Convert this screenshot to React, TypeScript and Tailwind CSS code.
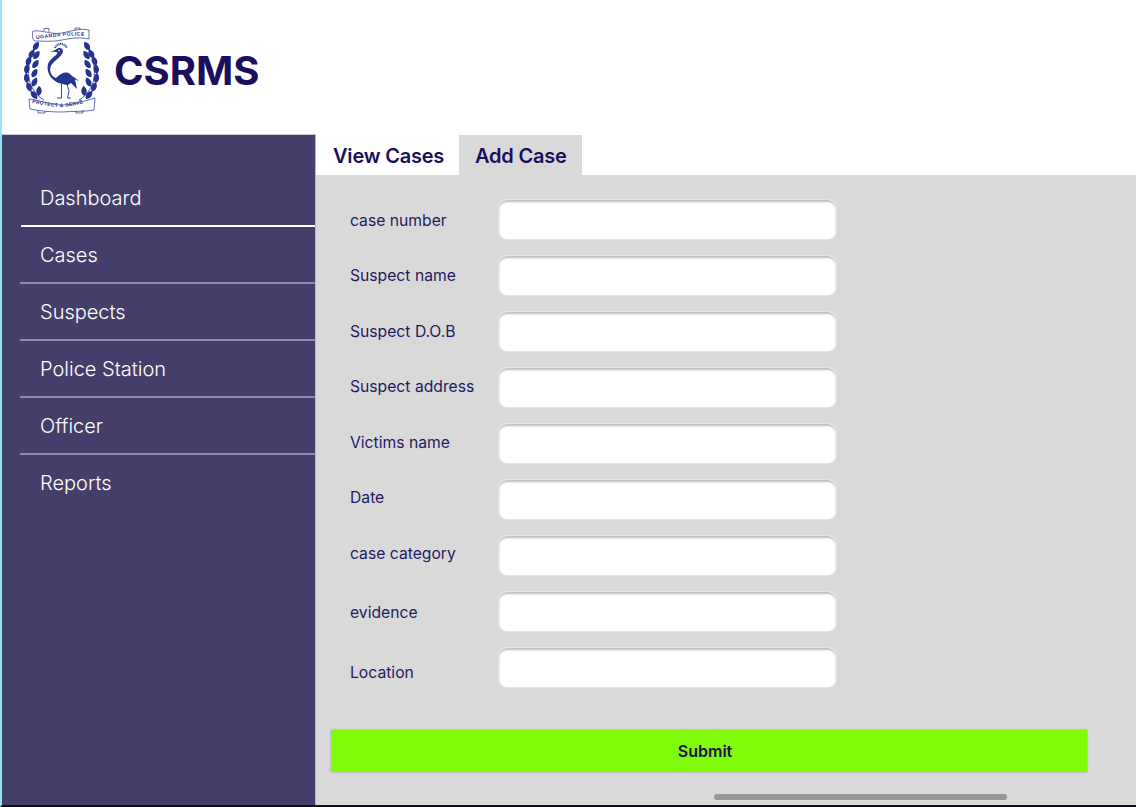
import React from "react";

const NAV = ["Dashboard", "Cases", "Suspects", "Police Station", "Officer", "Reports"];
const FIELDS: [string, string][] = [
  ["case number", "pt-[12px]"],
  ["Suspect name", "pt-[11px]"],
  ["Suspect D.O.B", "pt-[11px]"],
  ["Suspect address", "pt-[10px]"],
  ["Victims name", "pt-[10px]"],
  ["Date", "pt-[9px]"],
  ["case category", "pt-[9px]"],
  ["evidence", "pt-[12px]"],
  ["Location", "pt-[16px]"],
];

const BLUE = "#26348f";

const OUTER: [number, number, number][] = [
  [7.7, 27, 28], [4.6, 34, 20], [2.8, 42, 8], [2.6, 51, -6], [5, 60, -22], [10, 68, -38],
];
const INNER: [number, number, number][] = [
  [12, 19, 30], [12.5, 28, 35], [11.5, 37, 35], [10.5, 46, 30], [10.5, 55, 25], [15, 64, 5],
];

function Leaf({ x, y, r }: { x: number; y: number; r: number }) {
  return (
    <path
      transform={`translate(${x} ${y}) rotate(${r})`}
      d="M0 5C-3.6 2.5 -3.6 -2 0 -5C3.6 -2 3.6 2.5 0 5Z"
      fill={BLUE}
    />
  );
}

function Wreath() {
  return (
    <g>
      <path d="M12 16C5 32 1 50 9 62C12 67 16 71 20 73" fill="none" stroke={BLUE} strokeWidth="0.8" />
      {OUTER.map(([x, y, r], i) => <Leaf key={`o${i}`} x={x} y={y} r={r} />)}
      {INNER.map(([x, y, r], i) => <Leaf key={`i${i}`} x={x} y={y} r={r} />)}
    </g>
  );
}

function Logo() {
  const font = "'Liberation Sans', sans-serif";
  return (
    <svg width="76" height="87" viewBox="0 0 76 87" className="shrink-0">
      <defs>
        <path id="topArc" d="M12 12C24 11 30 9.5 38 9C46 8.5 54 8 64 9.5" />
        <path id="botArc" d="M8 76C20 78 28 80 37 80C47 80 56 77 66 74" />
      </defs>
      <Wreath />
      <g transform="matrix(-1 0 0 1 75 0)"><Wreath /></g>
      <g fill="none" stroke={BLUE} strokeWidth="0.7">
        <path d="M9 4C20 3 27 8 38 6C48 4 56 1 65 3V12C56 10 48 11 38 13C27 15 20 14 11 14C8 14 8 5 9 4Z" fill="#fff" />
        <path d="M20 4V1.5H25V5M51 3.5V1H56V2.5" />
        <path d="M5 72C16 73 26 78 38 78C50 78 60 74 71 71L70 83C60 85 50 84 38 85C26 85 16 84 6 82Z" fill="#fff" />
        <path d="M14 83V86H21V84M52 84V86H59V83" />
      </g>
      <text fontSize="5" fontWeight="700" fill={BLUE} fontFamily={font} letterSpacing="0.55">
        <textPath href="#topArc">UGANDA POLICE</textPath>
      </text>
      <text fontSize="5" fontWeight="700" fill={BLUE} fontFamily={font} letterSpacing="0.35">
        <textPath href="#botArc">PROTECT &amp; SERVE</textPath>
      </text>
      <path d="M31 21C33 16 40 15 43 21" fill="none" stroke={BLUE} strokeWidth="2" strokeDasharray="1 0.7" />
      <path d="M26.5 25L32 22.5C34 20 39 20.5 39 24C39 30 29 33 26.5 40C25 46 29 50 32 51C37 46 42 44 46 47L55 54L51 52.5L53 62L47 56L44 58C39 57 35 57 31 54C25 50 22.5 43 24 37C26 31 33 29 33.5 25.5C32 24.5 30 24.5 26.5 25Z" fill={BLUE} />
      <path d="M32 41C36 36 44 42 49 50" fill="none" stroke="#fff" strokeWidth="0.6" />
      <circle cx="35" cy="23.5" r="0.8" fill="#fff" />
      <path d="M37.5 57V71M37.5 71H33M43 57L45 64L43.5 71H47" fill="none" stroke={BLUE} strokeWidth="0.9" />
    </svg>
  );
}

export default function App() {
  return (
    <div className="relative h-[807px] w-[1136px] overflow-hidden bg-white font-['Inter',sans-serif] border-l-2 border-l-[#8ee8f5] border-b-2 border-b-[#101018] flex flex-col">
      <header className="h-[135px] shrink-0 flex items-center pl-[22px] pt-[5px] gap-[14px]">
        <Logo />
        <h1 className="text-[40px] leading-none font-bold text-[#190f5c] pt-[2px]">CSRMS</h1>
      </header>
      <div className="flex flex-1 min-h-0">
        <aside className="w-[314px] shrink-0 -mt-px bg-[#453e6a] border-r border-r-[#b9b6c9] border-t border-t-[#c9c8d6] pt-[35px]">
          <ul>
            {NAV.map((n, i) => (
              <li
                key={n}
                className={
                  i === 0
                    ? "h-[57px] ml-[19px] pl-[19px] pt-[14px] text-[20px] font-light leading-[28px] text-white border-b-2 border-b-white"
                    : i === 5
                    ? "h-[57px] ml-[18px] pl-[20px] pt-[14px] text-[20px] font-light leading-[28px] text-white"
                    : "h-[57px] ml-[18px] pl-[20px] pt-[14px] text-[20px] font-light leading-[28px] text-white border-b-2 border-b-[#8f8ba8]"
                }
              >
                {n}
              </li>
            ))}
          </ul>
        </aside>
        <main className="flex-1 min-w-0 flex flex-col">
          <nav className="h-[40px] shrink-0 flex text-[20px] font-semibold tracking-[-0.2px] text-[#190f5c]">
            <div className="w-[143px] pl-[17px] leading-[42px]">View Cases</div>
            <div className="w-[123px] pl-[16px] leading-[42px] bg-[#d9d9d9]">Add Case</div>
          </nav>
          <section className="flex-1 bg-[#d9d9d9] pt-[24px] pl-[34px]">
            <div className="flex flex-col gap-[15px]">
              {FIELDS.map(([label, pt]) => (
                <div key={label} className="flex h-[41px]">
                  <label className={`w-[148px] shrink-0 text-[15.7px] leading-[20px] text-[#241a63] ${pt}`}>{label}</label>
                  <input className="w-[339px] h-[41px] bg-white rounded-[9px] border border-[#e4e4e4] shadow-[inset_0_2px_2px_rgba(0,0,0,0.25)] outline-none" />
                </div>
              ))}
            </div>
            <button className="mt-[42px] -ml-[19px] block w-[756px] h-[42px] pr-[8px] bg-[#80fb08] text-[16px] font-semibold text-[#190f5c] shadow-[0_0_2px_rgba(0,0,0,0.3)]">
              Submit
            </button>
          </section>
        </main>
      </div>
      <div className="absolute left-[712px] top-[794px] w-[293px] h-[6px] rounded-full bg-[#979797]" />
    </div>
  );
}
